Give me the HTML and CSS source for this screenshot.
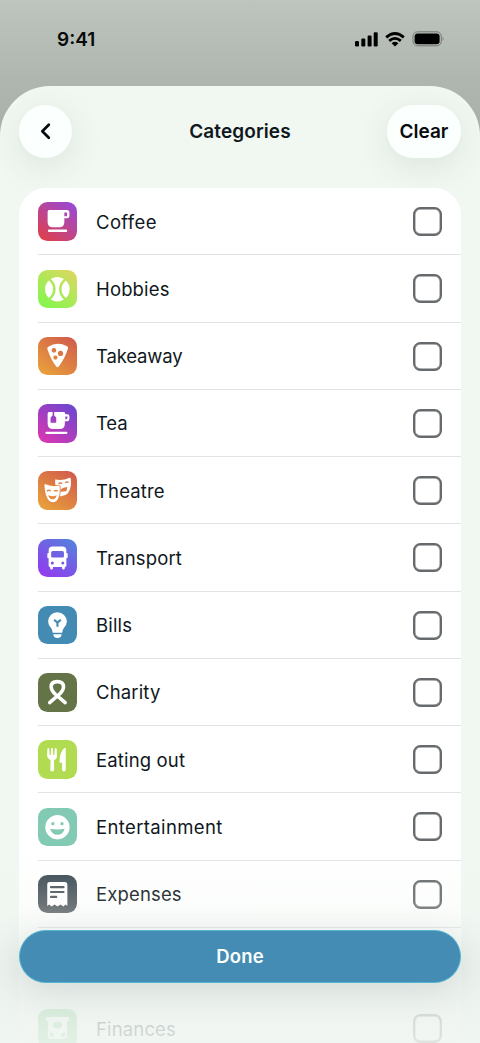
FILE: index.html
```html
<!DOCTYPE html>
<html lang="en">
<head>
<meta charset="utf-8">
<meta name="viewport" content="width=device-width, initial-scale=1">
<title>Categories</title>
<link rel="stylesheet" href="styles.css">
</head>
<body>
<div class="screen">
  <div class="status">
    <span class="time">9:41</span>
    <div class="status-icons">
      <svg width="23" height="15" viewBox="0 0 23 15"><rect x="0" y="9" width="4" height="5.5" rx="1.2"/><rect x="6.3" y="6.5" width="4" height="8" rx="1.2"/><rect x="12.6" y="3.5" width="4" height="11" rx="1.2"/><rect x="18.7" y="0.3" width="4" height="14.2" rx="1.2"/></svg>
      <svg width="20" height="15" viewBox="0 0 20 15" fill="none" stroke="#000" stroke-width="2.8"><path d="M1.2 5.4Q10-2.4 18.8 5.4"/><path d="M4.2 8.9Q10 3.8 15.8 8.9"/><path d="M6.6 11.2Q10 8.4 13.4 11.2L10 14.5Z" fill="#000" stroke="none"/></svg>
      <svg width="33" height="16" viewBox="0 0 33 16"><rect x="1" y=".8" width="28.3" height="14" rx="4.5" fill="none" stroke="#737873"/><rect x="2.6" y="2.4" width="25" height="10.8" rx="3"/><path d="M30.7 5.8Q32.5 7.8 30.7 9.8Z" fill="#737873"/></svg>
    </div>
  </div>
  <main class="sheet">
    <header class="header">
      <button class="pill back" aria-label="Back"><svg width="12" height="18" viewBox="0 0 12 18"><path d="M8.8 2.7L2.3 9.2L8.8 15.7" fill="none" stroke="#070b10" stroke-width="2.7" stroke-linecap="round" stroke-linejoin="round"/></svg></button>
      <h1 class="title">Categories</h1>
      <button class="pill clear">Clear</button>
    </header>
    <ul class="list">
      <li class="row"><svg class="tile coffee" viewBox="0 0 38 38"><path fill="#fff" fill-rule="evenodd" d="M11 8H28.5Q31 8 31 10.5V13.5Q31 16 28.5 16H26V20Q26 25 21 25H14.5Q9.5 25 9.5 20V9.5Q9.5 8 11 8ZM26 10.3V14H28.6V10.3Z"/><rect x="9.8" y="27.2" width="19" height="2.3" rx="1" fill="#fff"/></svg><span class="name wide">Coffee</span><i class="box"></i></li>
      <li class="row"><svg class="tile hobbies" viewBox="0 0 38 38"><path fill="#fff" d="M12.6 9A12 12 0 0 1 25.6 9Q20.8 13 20.8 19T25.6 29A12 12 0 0 1 12.6 29Q17.4 25 17.4 19T12.6 9ZM10.7 10.3Q14.9 14 14.9 19T10.7 27.7A12 12 0 0 1 10.7 10.3ZM27.5 10.3A12 12 0 0 1 27.5 27.7Q23.3 24 23.3 19T27.5 10.3Z"/></svg><span class="name">Hobbies</span><i class="box"></i></li>
      <li class="row"><svg class="tile takeaway" viewBox="0 0 38 38"><path fill="#fff" fill-rule="evenodd" d="M10.2 9.5Q19 4.2 28.7 9.1Q30.1 9.8 29.6 11.4Q26.8 20.6 20.5 29.1Q19.2 30.7 18 29.1Q13.2 23.6 9.3 12.2Q8.5 10.4 10.2 9.5ZM15.7 10.9a2.3 2.3 0 1 0 0 4.6a2.3 2.3 0 1 0 0-4.6ZM22.2 13.6a2.6 2.6 0 1 0 0 5.2a2.6 2.6 0 1 0 0-5.2ZM17.2 18.2a2.1 2.1 0 1 0 0 4.2a2.1 2.1 0 1 0 0-4.2Z"/></svg><span class="name tight">Takeaway</span><i class="box"></i></li>
      <li class="row"><svg class="tile tea" viewBox="0 0 38 38"><path fill="#fff" fill-rule="evenodd" d="M11 8H14.4V11.3L12.4 13.4V18.6H18V13.4L16 11.3V8H25.5Q27 8 27 9.5V10.2H29Q31 10.2 31 12.2V14.2Q31 17 28.3 17H26.5V19.5Q26.5 24.7 21.3 24.7H15Q9.5 24.7 9.5 19.2V9.5Q9.5 8 11 8ZM27 12.3V15.1Q29 15.3 29 13.5V12.3Z"/><path d="M8.3 28.4H28" stroke="#fff" stroke-width="2.2" stroke-linecap="round"/></svg><span class="name tight">Tea</span><i class="box"></i></li>
      <li class="row"><svg class="tile theatre" viewBox="0 0 38 38"><path fill="#fff" d="M16.9 8.5Q24.5 10 31.2 6.6Q32.2 6.4 32.3 7.5Q33.5 16.2 29.5 22Q26.4 25.2 22 24.8L17 13Z"/><path d="M20.2 12.4q2-1.4 3.7 0m3-.6q1.6-1.7 3.3-.6M22.5 19.8q1.2-3 5.8-3.2l-.8 2.8Z" fill="#dc7844" stroke="#dc7844" stroke-width="1.1"/><path fill="#fff" stroke="#e28540" stroke-width="1.7" paint-order="stroke" d="M7.5 13.2Q13.5 16 20.2 14.4Q21.3 14.3 21.4 15.4Q22.2 25.3 18.5 29.3Q15 32.4 11.2 29.7Q7 25.8 6.3 14.1Q6.3 12.8 7.5 13.2Z"/><path d="M8.7 19.8q2-1.7 3.8 0m3.3.2q2-1.5 3.7 0" fill="none" stroke="#e5893d" stroke-width="1.5"/><path d="M10 24Q15 25.7 18.4 24Q17.6 27.9 14.4 27.9T10 24Z" fill="#e5893d"/></svg><span class="name">Theatre</span><i class="box"></i></li>
      <li class="row"><svg class="tile transport" viewBox="0 0 38 38"><path fill="#fff" fill-rule="evenodd" d="M14.5 7.5H24Q28 7.5 28 11.5V13.8Q29.3 13.6 29.3 15V18Q29.3 19.2 28 19V26.5Q28 27.6 26.8 27.6H26.5V28.7Q26.5 30.2 25.1 30.2T23.7 28.7V27.6H14.8V28.7Q14.8 30.2 13.4 30.2T12 28.7V27.6H11.7Q10.5 27.6 10.5 26.5V19Q9.2 19.2 9.2 18V15Q9.2 13.6 10.5 13.8V11.5Q10.5 7.5 14.5 7.5ZM14.5 11.9Q13 11.9 13 13.4V17.2Q13 18.3 14.2 18.3H24.4Q25.6 18.3 25.6 17.2V13.4Q25.6 11.9 24.1 11.9ZM14.1 22.1a1.5 1.5 0 1 0 0 3a1.5 1.5 0 1 0 0-3ZM24.5 22.1a1.5 1.5 0 1 0 0 3a1.5 1.5 0 1 0 0-3Z"/></svg><span class="name">Transport</span><i class="box"></i></li>
      <li class="row"><svg class="tile bills" viewBox="0 0 38 38"><path fill="#fff" d="M19 6.2A9.2 9.2 0 0 1 28.5 15.4Q28.4 19 25.5 21.8Q24.2 23.3 23.9 26.3H14.5Q14.2 23.3 12.9 21.8Q10 19 10 15.4A9 9 0 0 1 19 6.2ZM15.2 28H23.3Q23.3 31.6 19.2 31.6T15.2 28Z"/><path d="M15.9 13.6L19.2 16.4L22.5 13.6M19.2 16.4V20.5" fill="none" stroke="#438bb2" stroke-width="2.1"/></svg><span class="name">Bills</span><i class="box"></i></li>
      <li class="row"><svg class="tile charity" viewBox="0 0 38 38"><path d="M11.5 29.2L20.8 21.2Q25.2 17.4 25.2 13.6Q25.2 8.5 19.1 8.5T13 13.6Q13 17.4 17.4 21.2L26.8 29.2" fill="none" stroke="#fff" stroke-width="3.5" stroke-linecap="round"/></svg><span class="name">Charity</span><i class="box"></i></li>
      <li class="row"><svg class="tile eating" viewBox="0 0 38 38"><path fill="#fff" d="M9.3 8.6q.9-1.3 1.8 0l.5 6.2h1l.3-6.2q1-1.3 1.9 0l.3 6.2h1l.5-6.2q.9-1.3 1.8 0l.4 6.9Q18.8 18.5 15.7 20.1L16 29.4Q16 31 14.1 31T12.1 29.4L12.4 20.1Q9.2 18.5 8.9 15.5ZM27.4 8.4V29.3Q27.4 31 25.6 31T23.8 29.3V22.4H22Q21.2 22.4 21.2 21.5Q21.4 11.3 26.2 7.8Q27.4 7.3 27.4 8.4Z"/></svg><span class="name">Eating out</span><i class="box"></i></li>
      <li class="row"><svg class="tile entertainment" viewBox="0 0 38 38"><circle cx="19.2" cy="19" r="12" fill="#fff"/><circle cx="14.7" cy="15.5" r="1.6" fill="#82cab3"/><circle cx="23.7" cy="15.5" r="1.6" fill="#82cab3"/><path d="M12 20.5Q19.2 22 26.3 20.5Q24.8 26.5 19.2 26.5T12 20.5Z" fill="#82cab3"/></svg><span class="name wide">Entertainment</span><i class="box"></i></li>
      <li class="row"><svg class="tile expenses" viewBox="0 0 38 38"><path fill="#fff" d="M11.5 7H26.5Q29 7 29 9.5V30.6L27.3 29L25 31L22.2 29L19.3 31L16.4 29L13.4 31L11 29L9.1 30.6V9.5Q9.1 7 11.5 7Z"/><path d="M12.8 12H25.2M12.8 16.8H25.2M12.8 21.6H18" stroke="#4b565e" stroke-width="2.1" stroke-linecap="round"/></svg><span class="name">Expenses</span><i class="box"></i></li>
      <li class="row covered"></li>
      <li class="row"><svg class="tile finances" viewBox="0 0 38 38"><path fill="#fff" fill-rule="evenodd" d="M8 8H30.5V12H28.5V27Q28.5 29.5 26 29.5H12.5Q10 29.5 10 27V12H8ZM19.2 12.7a4.8 3.2 0 1 0 0 6.4a4.8 3.2 0 1 0 0-6.4ZM12 27.5H16Q15.4 23.4 12 23ZM26.5 27.5V23Q23 23.4 22.4 27.5Z"/></svg><span class="name">Finances</span><i class="box"></i></li>
    </ul>
  </main>
  <div class="fade"></div>
  <button class="done">Done</button>
</div>
</body>
</html>
```
FILE: styles.css
```css
* { box-sizing: border-box; }
body { margin: 0; font-family: Inter, "Liberation Sans", sans-serif; color: #10171d; }
button { border: 0; padding: 0; font: inherit; }
.screen { position: relative; width: 480px; height: 1043px; overflow: hidden; background: linear-gradient(#bec4be 0, #afb5af 80px, #a7ada8 150px); }
.status { height: 86px; padding: 25px 35px 33px 57px; display: flex; justify-content: space-between; align-items: center; }
.time { color: #080b09; font-size: 19px; font-weight: 600; }
.status-icons { display: flex; align-items: center; gap: 7px; }
.sheet { height: 957px; overflow: hidden; border-radius: 50px 50px 0 0; background: #f1f8f2; padding: 19px 19px 0; }
.header { display: flex; justify-content: space-between; align-items: center; height: 83px; padding-bottom: 30.5px; }
.pill { height: 52.5px; border-radius: 27px; background: #fbfffd; color: #070b10; box-shadow: 0 8px 34px rgba(55, 65, 62, .11); display: flex; align-items: center; justify-content: center; }
.back { width: 53px; }
.clear { width: 74px; font-size: 19px; font-weight: 600; }
.title { margin: 0 0 0 21px; font-size: 19px; font-weight: 600; letter-spacing: .1px; }
.list { position: relative; list-style: none; margin: 0; padding: 0; background: #fefffe; border-radius: 27px 27px 0 0; }
.row { height: 67.26px; margin-left: 19px; padding: 1px 19px 0 0; display: flex; align-items: center; border-bottom: 1px solid #e2e3e3; }
.covered { border-color: transparent; }
.tile { width: 38.5px; height: 38.5px; border-radius: 9.5px; flex: none; }
.name { flex: 1; margin-left: 19.5px; font-size: 18.5px; letter-spacing: .15px; }
.wide { letter-spacing: .37px; }
.tight { letter-spacing: -.15px; }
.box { width: 29px; height: 29px; border: 2px solid #666a6c; border-radius: 7.5px; box-shadow: inset 0 0 0 .4px #666a6c; }
.coffee { background: linear-gradient(35deg, #dc4051 10%, #9c49d0 90%); }
.hobbies { background: linear-gradient(35deg, #86f64f 10%, #d7d960 90%); }
.takeaway, .theatre { background: linear-gradient(35deg, #e9a23b 5%, #d15b4c 95%); }
.tea { background: linear-gradient(35deg, #dc36b1 5%, #6947d0 95%); }
.transport { background: linear-gradient(35deg, #9439ef 5%, #5581dc 95%); }
.bills { background: #438bb2; }
.charity { background: #647447; }
.eating { background: #b1db50; }
.entertainment { background: #82cab3; }
.expenses { background: linear-gradient(#3c4b55, #5b6266); }
.finances { background: #7fcf87; }
.fade { position: absolute; inset: 846px 0 0; background: linear-gradient(rgba(239, 245, 241, 0), rgba(238, 243, 239, .15) 30%, rgba(234, 240, 236, .75) 62%, rgba(237, 243, 239, .84) 88%, rgba(239, 245, 241, .88)); }
.done { position: absolute; left: 19px; top: 929.5px; width: 442px; height: 53.5px; border-radius: 27px; border: 1px solid #55b6d1; background: #448cb4; color: #fbfffd; font-size: 18.5px; font-weight: 600; letter-spacing: .2px; box-shadow: 0 8px 34px rgba(55, 75, 68, .15); }
```
